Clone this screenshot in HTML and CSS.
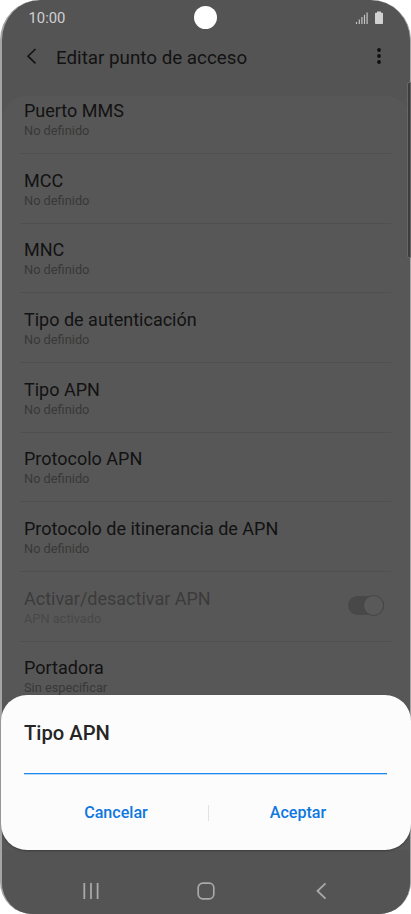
FILE: index.html
```
<!DOCTYPE html>
<html lang="es">
<head>
  <meta charset="UTF-8">
  <meta name="viewport" content="width=device-width, initial-scale=1.0">
  <title>Editar punto de acceso</title>
  <link rel="stylesheet" href="styles.css">
</head>
<body>
  <div class="phone">
    <div class="status-bar">
      <span class="time">10:00</span>
      <svg class="status-icons" width="30" height="14" viewBox="0 0 30 14">
        <path d="M2.500 13v-2M5.300 13V8.500M7.900 13V6M10.500 13V3.700M13.100 13V1.500" stroke="#c4c4c4" stroke-width="1.2"/>
        <path d="M23 .5h4v1.300h1.200q.8 0 .8.8v9.600q0 .8-.8.8h-6.400q-.8 0-.8-.8V2.600q0-.8.8-.8H23z" fill="#d2d2d2"/>
      </svg>
    </div>
    <div class="camera"></div>

    <header>
      <svg class="back" width="12" height="18" viewBox="0 0 12 18"><path d="M9.500 2L2 9.200l7.500 7.200" fill="none" stroke="#121212" stroke-width="1.600"/></svg>
      <h1>Editar punto de acceso</h1>
      <svg class="more" width="6" height="18" viewBox="0 0 6 18" fill="#101010">
        <circle cx="3" cy="3" r="1.9"/><circle cx="3" cy="9" r="1.9"/><circle cx="3" cy="15" r="1.9"/>
      </svg>
    </header>

    <main>
      <div class="item first"><div class="name">Puerto MMS</div><div class="value">No definido</div></div>
      <div class="item"><div class="name">MCC</div><div class="value">No definido</div></div>
      <div class="item"><div class="name">MNC</div><div class="value">No definido</div></div>
      <div class="item"><div class="name">Tipo de autenticación</div><div class="value">No definido</div></div>
      <div class="item"><div class="name">Tipo APN</div><div class="value">No definido</div></div>
      <div class="item"><div class="name">Protocolo APN</div><div class="value">No definido</div></div>
      <div class="item"><div class="name">Protocolo de itinerancia de APN</div><div class="value">No definido</div></div>
      <div class="item disabled">
        <div>
          <div class="name">Activar/desactivar APN</div>
          <div class="value">APN activado</div>
        </div>
        <div class="switch"><div class="knob"></div></div>
      </div>
      <div class="item last"><div class="name">Portadora</div><div class="value">Sin especificar</div></div>
    </main>
    <div class="scrollbar"></div>

    <nav>
      <svg width="18" height="18" viewBox="0 0 18 18"><path d="M2.300 1v16M9 1v16M15.600 1v16" stroke="#a9a9a9" stroke-width="1.800"/></svg>
      <svg width="18" height="18" viewBox="0 0 18 18"><rect x="1.200" y="1.200" width="15.600" height="15.600" rx="4.500" fill="none" stroke="#a9a9a9" stroke-width="1.700"/></svg>
      <svg width="18" height="18" viewBox="0 0 18 18"><path d="M13.500 1.300L5.500 9l8 7.700" fill="none" stroke="#a9a9a9" stroke-width="1.800"/></svg>
    </nav>
  </div>

  <!-- Diálogo -->
  <div class="dialog">
    <h2>Tipo APN</h2>
    <input type="text" class="field">
    <div class="buttons">
      <button class="cancel">Cancelar</button>
      <span class="separator"></span>
      <button>Aceptar</button>
    </div>
  </div>
</body>
</html>
```
FILE: styles.css
```
* {
  box-sizing: border-box;
}

body {
  margin: 0;
  height: 914px;
  background: #fff;
  font-family: Roboto, sans-serif;
  position: relative;
  overflow: hidden;
}

.phone {
  height: 914px;
  display: flex;
  flex-direction: column;
  background: #545454;
  border: solid #a5a5a5;
  border-width: 0 1px 0 2px;
  border-radius: 40px 40px 32px 32px;
  overflow: hidden;
}

.status-bar {
  height: 36px;
  flex: none;
  display: flex;
  justify-content: space-between;
  padding: 9px 26px 0 26.5px;
}

.time {
  font-size: 14.8px;
  line-height: 18px;
  color: #d0d0d0;
}

.status-icons {
  margin-top: 2px;
}

.camera {
  position: absolute;
  left: 194px;
  top: 6px;
  width: 23px;
  height: 23px;
  border-radius: 50%;
  background: #fff;
}

header {
  height: 60px;
  flex: none;
  display: flex;
  align-items: flex-start;
  padding: 11px 28px 0 24px;
}

.back {
  margin: 0 18px 0 0;
}

h1 {
  flex: 1;
  margin: 0;
  font-size: 18.8px;
  line-height: 22px;
  font-weight: 400;
  color: #121212;
}

main {
  flex: 1;
  min-height: 0;
  overflow: hidden;
  background: #575757;
  border-radius: 24px 24px 0 0;
  padding: 0 19px 0 18px;
}

.item {
  height: 69.7px;
  padding: 15.5px 4px 0;
  border-bottom: 1px solid #4f4f4f;
}

.item.first {
  height: 58px;
  padding-top: 4px;
}

.name {
  font-size: 18px;
  line-height: 22px;
  color: #121212;
}

.value {
  font-size: 12.8px;
  line-height: 18px;
  color: #383838;
}

.disabled {
  display: flex;
  justify-content: space-between;
}

.disabled .name {
  color: #3b3b3b;
}

.disabled .value {
  color: #484848;
}

.switch {
  width: 36px;
  height: 19px;
  margin: 8px 3px 0 0;
  border-radius: 10px;
  background: #484848;
}

.knob {
  width: 21px;
  height: 21px;
  margin: -1px 0 0 15px;
  border: 1px solid #454545;
  border-radius: 50%;
  background: #595959;
}

.last {
  border-bottom: none;
}

.scrollbar {
  position: absolute;
  right: 0;
  top: 82px;
  width: 4px;
  height: 176px;
  border: 1px solid #666;
  border-radius: 2px 0 0 2px;
  background: #3c3c3c;
}

nav {
  height: 64px;
  flex: none;
  display: flex;
  justify-content: space-between;
  padding: 32px 80px 0;
  background: #545454;
}

.dialog {
  position: absolute;
  left: 1px;
  right: 0;
  top: 695px;
  height: 155px;
  padding: 26px 24px 0 23px;
  background: #fcfcfc;
  border-radius: 26px;
  box-shadow: 0 1px 2px rgba(0, 0, 0, 0.3);
}

h2 {
  margin: 0;
  font-size: 20.2px;
  line-height: 24px;
  font-weight: 500;
  color: #252525;
}

.field {
  display: block;
  width: 100%;
  height: 29px;
  padding: 0;
  border: none;
  border-bottom: 1px solid #2189ee;
  box-shadow: 0 1px 0 #b5d9f9;
  outline: none;
  background: none;
}

.buttons {
  display: flex;
  align-items: center;
  margin-top: 28px;
  height: 22px;
}

button {
  flex: 1;
  padding: 0;
  border: none;
  background: none;
  font: 500 16.1px/22px Roboto, sans-serif;
  color: #0f77e0;
}

.cancel {
  flex: none;
  width: 184px;
}

.separator {
  width: 1px;
  height: 16px;
  background: #e2e2e2;
}
```
